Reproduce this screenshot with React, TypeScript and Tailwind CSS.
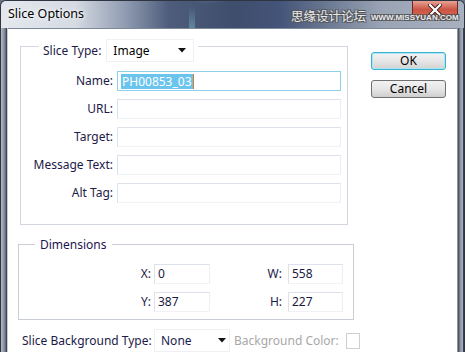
import type { ReactNode } from "react";

const font = { fontFamily: "'Noto Sans', 'Open Sans', 'Noto Sans CJK SC', sans-serif" };

function Box({ w, children, active }: { w: number; children?: ReactNode; active?: boolean }) {
  return (
    <div
      className={
        "h-[20px] flex items-center pl-[3px] text-[12px] text-[#1a1a40] bg-white " +
        (active ? "border border-[#8fd0ec]" : "border border-[#dde1ea] border-b-[#f0f2f6] border-r-[#eceef3]")
      }
      style={{ width: w }}
    >
      {children}
    </div>
  );
}

function Arrow() {
  return (
    <svg width="8" height="5" viewBox="0 0 8 5">
      <path d="M0 0h8L4 4.5z" fill="#111" />
    </svg>
  );
}

function Row({ label, children }: { label: string; children?: ReactNode }) {
  return (
    <div className="flex items-center h-[20px]">
      <div className="w-[93px] text-right pr-[1px] text-[12px] text-[#1c1a48]">{label}</div>
      <div className="ml-[3px]">{children}</div>
    </div>
  );
}

function GlassBg() {
  return (
    <svg className="absolute inset-0" width="465" height="28" viewBox="0 0 465 28">
      <defs>
        <linearGradient id="glass" x1="0" y1="0" x2="1" y2="0">
          <stop offset="0" stopColor="#e4e8ee" />
          <stop offset="0.16" stopColor="#d5dae3" />
          <stop offset="0.27" stopColor="#8e9ab0" />
          <stop offset="0.36" stopColor="#4e5d7b" />
          <stop offset="0.5" stopColor="#3f4e6c" />
          <stop offset="0.6" stopColor="#44547a" />
          <stop offset="0.7" stopColor="#6a7891" />
          <stop offset="0.82" stopColor="#9aa4b5" />
          <stop offset="1" stopColor="#a9b1bf" />
        </linearGradient>
        <radialGradient id="glow" cx="0.5" cy="0" r="0.6">
          <stop offset="0" stopColor="#8aa0ff" stopOpacity="0.85" />
          <stop offset="1" stopColor="#8aa0ff" stopOpacity="0" />
        </radialGradient>
        <linearGradient id="streak" x1="0" y1="0" x2="0" y2="1">
          <stop offset="0" stopColor="#80c8c8" stopOpacity="0" />
          <stop offset="1" stopColor="#80c8c8" stopOpacity="0.45" />
        </linearGradient>
      </defs>
      <rect width="465" height="28" fill="url(#glass)" />
      <ellipse cx="208" cy="0" rx="28" ry="14" fill="url(#glow)" />
      <rect x="188" y="6" width="6" height="22" fill="url(#streak)" />
    </svg>
  );
}

export default function App() {
  return (
    <div className="w-[465px] h-[352px] overflow-hidden relative bg-[#6b7486]" style={font}>
      {/* title bar */}
      <div className="relative h-[28px] rounded-t-[6px] overflow-hidden border-t border-l border-r border-[#2e3440] flex items-start pl-[7px]">
        <GlassBg />
        <span className="relative mt-[4px] text-[12.5px] text-black [text-shadow:0_0_6px_#fff,0_0_3px_#fff]">Slice Options</span>
        {/* close button */}
        <div className="absolute right-[6px] top-[-1px] w-[46px] h-[20px] rounded-b-[4px] border border-[#6a2a2a] border-t-0 bg-linear-to-b from-[#e9aa9f] via-[#cc5444] to-[#d66a50] flex items-center justify-center">
          <svg width="14" height="12" viewBox="0 0 14 12">
            <path d="M2 1l10 10M12 1L2 11" stroke="#3a1c1c" strokeWidth="4" strokeLinecap="square" />
            <path d="M2 1l10 10M12 1L2 11" stroke="#fff" strokeWidth="2.2" strokeLinecap="square" />
          </svg>
        </div>
        {/* watermark */}
        <div className="absolute left-[290px] top-[7px] flex items-end gap-[5px] whitespace-nowrap text-[#e8ebf0] [text-shadow:1px_1px_0_#555,-1px_-1px_0_#555,1px_-1px_0_#555,-1px_1px_0_#555]">
          <span className="text-[12.5px] leading-[16px]" style={{ fontFamily: "'Noto Sans CJK SC', sans-serif" }}>思缘设计论坛</span>
          <span className="text-[8px] leading-[13px] font-bold" style={{ fontFamily: "'Liberation Sans', sans-serif" }}>WWW.MISSYUAN.COM</span>
        </div>
      </div>

      {/* body */}
      <div className="flex h-[324px]">
        <div className="w-[8px] bg-[linear-gradient(90deg,#2f3640_0%,#2f3640_12%,#b1b8c3_14%,#8a93a2_50%,#5d6676_74%,#3a414c_76%,#3a414c_86%,#c9ced6_88%)]" />
        <div className="w-[449px] bg-white flex border-t border-[#7e8898]">
          {/* left column */}
          <div className="w-[356px] flex flex-col">
            {/* group 1 */}
            <div className="relative ml-[12px] mt-[17px] w-[328px] h-[180px] border border-[#d3d8e0]">
              <div className="absolute left-[18px] top-[-8px] flex items-center bg-white pl-[4px]">
                <span className="text-[12px] text-[#1c1a48] pr-[5px]">Slice Type:</span>
                <div className="w-[88px] h-[23px] border border-[#eef0f4] flex items-center justify-between pl-[6px] pr-[7px] text-[12px] text-black bg-white">
                  <span>Image</span>
                  <Arrow />
                </div>
                <div className="w-[4px]" />
              </div>
              <div className="mt-[24px] flex flex-col gap-[8px]">
                <Row label="Name:">
                  <Box w={224} active>
                    <span className="bg-[#6ac4ee] text-white px-[1px] leading-[15px]">PH00853_03</span>
                    <span className="w-[1px] h-[15px] bg-[#e07a20]" />
                  </Box>
                </Row>
                <Row label="URL:"><Box w={224} /></Row>
                <Row label="Target:"><Box w={224} /></Row>
                <Row label="Message Text:"><Box w={224} /></Row>
                <Row label="Alt Tag:"><Box w={224} /></Row>
              </div>
            </div>

            {/* group 2 */}
            <div className="relative ml-[10px] mt-[19px] w-[336px] h-[77px] border border-[#c9ced6]">
              <span className="absolute left-[16px] top-[-9px] bg-white px-[5px] text-[12px] text-[#1e1452]">Dimensions</span>
              <div className="mt-[19px] flex flex-col gap-[8px]">
                <div className="flex items-center h-[20px]">
                  <span className="w-[132px] text-right text-[12px] text-[#1c1a48]">X:</span>
                  <div className="ml-[3px]"><Box w={56}>0</Box></div>
                  <span className="w-[72px] text-right text-[12px] text-[#1c1a48]">W:</span>
                  <div className="ml-[6px]"><Box w={55}>558</Box></div>
                </div>
                <div className="flex items-center h-[20px]">
                  <span className="w-[132px] text-right text-[12px] text-[#1c1a48]">Y:</span>
                  <div className="ml-[3px]"><Box w={56}>387</Box></div>
                  <span className="w-[72px] text-right text-[12px] text-[#1c1a48]">H:</span>
                  <div className="ml-[6px]"><Box w={55}>227</Box></div>
                </div>
              </div>
            </div>

            {/* bottom row */}
            <div className="ml-[14px] mt-[9px] flex items-start">
              <span className="w-[132px] mt-[3px] text-[12px] text-[#1c1a48]">Slice Background Type:</span>
              <div className="w-[76px] h-[23px] border border-[#eef0f4] flex items-center justify-between pl-[6px] pr-[3px] text-[12px] text-[#1a1a50]">
                <span>None</span>
                <Arrow />
              </div>
              <span className="ml-[4px] mt-[3px] text-[12px] text-[#a8a8a8]">Background Color:</span>
              <div className="ml-[7px] mt-[4px] w-[14px] h-[16px] border border-[#cfcfcf]" />
            </div>
          </div>

          {/* right column */}
          <div className="ml-[7px] pt-[23px] flex flex-col gap-[10px]">
            <div className="w-[75px] h-[18px] rounded-[3px] border border-[#3cb0d0] shadow-[inset_0_0_0_1px_#a8e8f4] bg-linear-to-b from-[#f4f4f4] via-[#e6e6e6] to-[#d2d2d2] flex items-center justify-center text-[12px] text-black">OK</div>
            <div className="w-[75px] h-[18px] rounded-[3px] border border-[#707070] bg-linear-to-b from-[#f2f2f2] via-[#e6e6e6] to-[#cfcfcf] flex items-center justify-center text-[12px] text-black">Cancel</div>
          </div>
        </div>
        <div className="w-[8px] bg-[linear-gradient(90deg,#c9ced6_0%,#5b6371_12%,#3e4553_14%,#8a93a2_40%,#a6aebb_70%,#3a414c_80%,#2b313a_100%)]" />
      </div>
    </div>
  );
}
